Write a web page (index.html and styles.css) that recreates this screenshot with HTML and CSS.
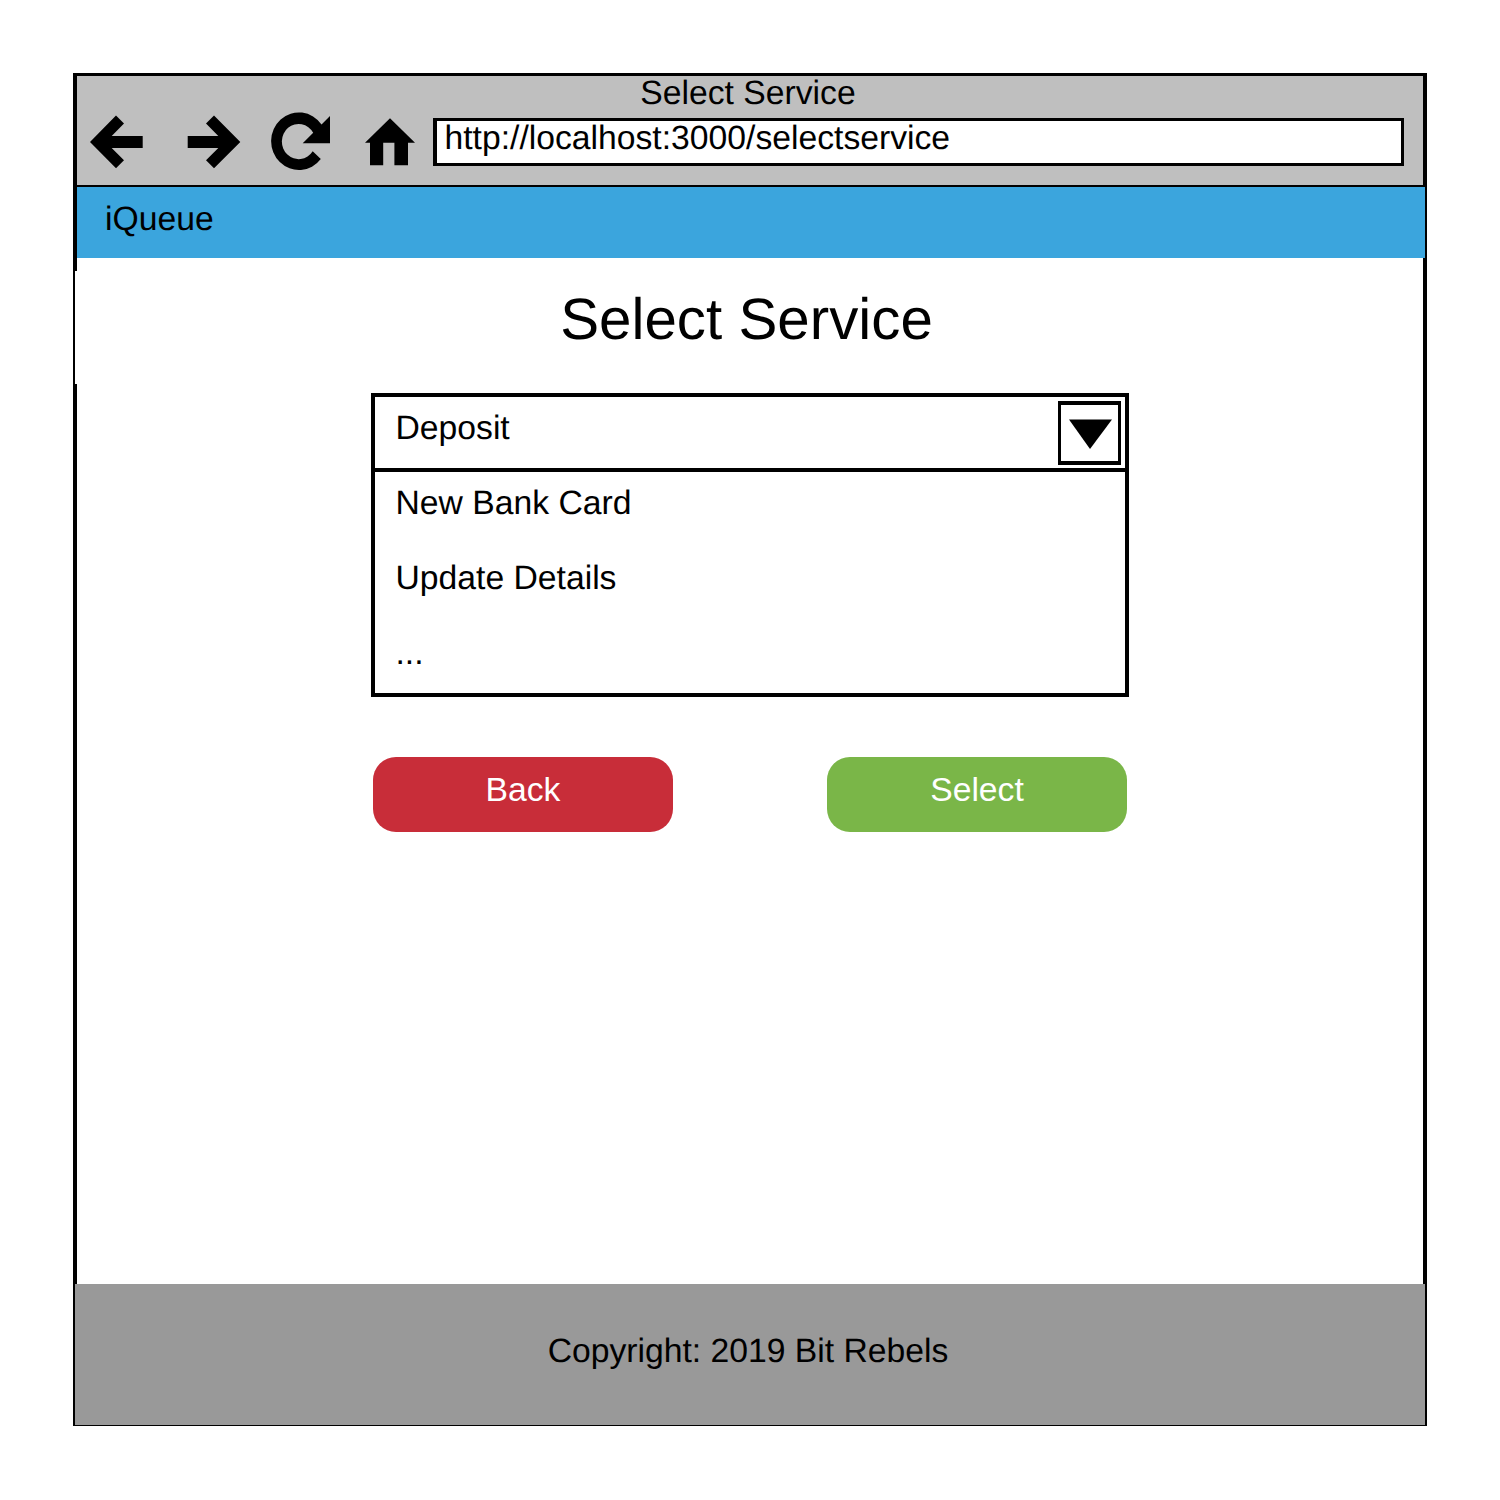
FILE: index.html
```html
<!DOCTYPE html>
<html lang="en">
<head>
<meta charset="utf-8">
<title>Select Service</title>
<link rel="stylesheet" href="styles.css">
</head>
<body>
<div class="window">
  <header class="chrome">
    <div class="chrome-title">Select Service</div>
    <div class="toolbar">
      <svg class="nav-icons" width="356" height="64" viewBox="77 108 356 64" aria-hidden="true">
        <path d="M90 142 116 115.5 124 123.4 111.7 136H142.7V148H111.7L124 160.3 116 168.3Z"/>
        <path d="M240.3 142 214 115.5 206 123.4 218.3 136H187.7V148H218.3L206 160.3 214 168.3Z"/>
        <path d="M320.8 159A27.8 28.8 0 1 1 321.5 124.4L330 116V143.3H302.7L313.2 132.7A16.8 17.6 0 1 0 312.7 151.2Z"/>
        <path d="M390 118.3 415 142.8H408V165.3H394.4V142.8H383.2V165.3H370V142.8H365Z"/>
      </svg>
      <div class="address">http://localhost:3000/selectservice</div>
    </div>
  </header>
  <nav class="brand">iQueue</nav>
  <div class="spacer"></div>
  <h1 class="heading">Select Service</h1>
  <main class="content">
    <div class="dropdown">
      <div class="selected">
        <span>Deposit</span>
        <span class="toggle">
          <svg width="43" height="30" viewBox="0 0 43 30" aria-hidden="true"><path d="M0 .5H43L21 30Z"/></svg>
        </span>
      </div>
      <div class="option">New Bank Card</div>
      <div class="option">Update Details</div>
      <div class="option">...</div>
    </div>
    <div class="actions">
      <button class="button back">Back</button>
      <button class="button select">Select</button>
    </div>
  </main>
  <footer class="footer">Copyright: 2019 Bit Rebels</footer>
</div>
</body>
</html>
```
FILE: styles.css
```css
* {
  box-sizing: border-box;
}

body {
  margin: 0;
  padding: 73px;
  background: #fff;
  color: #000;
  font: 33.7px/32px "Liberation Sans", Arial, sans-serif;
  text-rendering: geometricPrecision;
}

.window {
  display: flex;
  flex-direction: column;
  width: 1354px;
  height: 1353px;
  border: solid #000;
  border-width: 3px 2px 1px;
}

.chrome {
  height: 111px;
  border: solid #000;
  border-width: 0 2px 2px;
  background: #bfbfbf;
}

.chrome-title {
  height: 32px;
  padding: 1px 4px 0 0;
  text-align: center;
}

.toolbar {
  display: flex;
}

.nav-icons {
  display: block;
  flex: none;
}

.address {
  width: 971px;
  height: 48px;
  margin-top: 10px;
  padding: 1px 0 0 7.5px;
  border: 3px solid #000;
  border-left-width: 4px;
  background: #fff;
}

.brand {
  height: 71px;
  padding: 16px 28px;
  border-left: 2px solid #000;
  background: #3ba5dd;
}

.spacer {
  height: 13px;
  border: solid #000;
  border-width: 0 2px;
}

.heading {
  height: 113px;
  margin: 0;
  padding: 19px 5px 0 0;
  border-right: 2px solid #000;
  font-size: 58.3px;
  font-weight: 400;
  line-height: 60px;
  text-align: center;
}

.content {
  flex: 1;
  padding: 9px 294px 0;
  border: solid #000;
  border-width: 0 2px;
}

.dropdown {
  height: 304px;
  border: 4px solid #000;
}

.selected {
  display: flex;
  justify-content: space-between;
  height: 75px;
  padding: 15px 4px 0 20.5px;
  border-bottom: 4px solid #000;
}

.toggle {
  width: 63px;
  height: 64px;
  margin-top: -11px;
  padding: 14px 0 0 8px;
  border: solid #000;
  border-width: 4px 3px;
}

.toggle svg {
  display: block;
}

.option {
  height: 75px;
  padding: 15px 20.5px 0;
}

.actions {
  display: flex;
  justify-content: space-between;
  padding: 60px 2px 0;
}

.button {
  width: 300px;
  height: 75px;
  padding: 0 0 11px;
  border: 0;
  border-radius: 23px;
  color: #fff;
  font: inherit;
}

.back {
  background: #c82d39;
}

.select {
  background: #7ab648;
}

.footer {
  height: 141px;
  padding: 51px 4px 0 0;
  background: #999;
  text-align: center;
}
```
